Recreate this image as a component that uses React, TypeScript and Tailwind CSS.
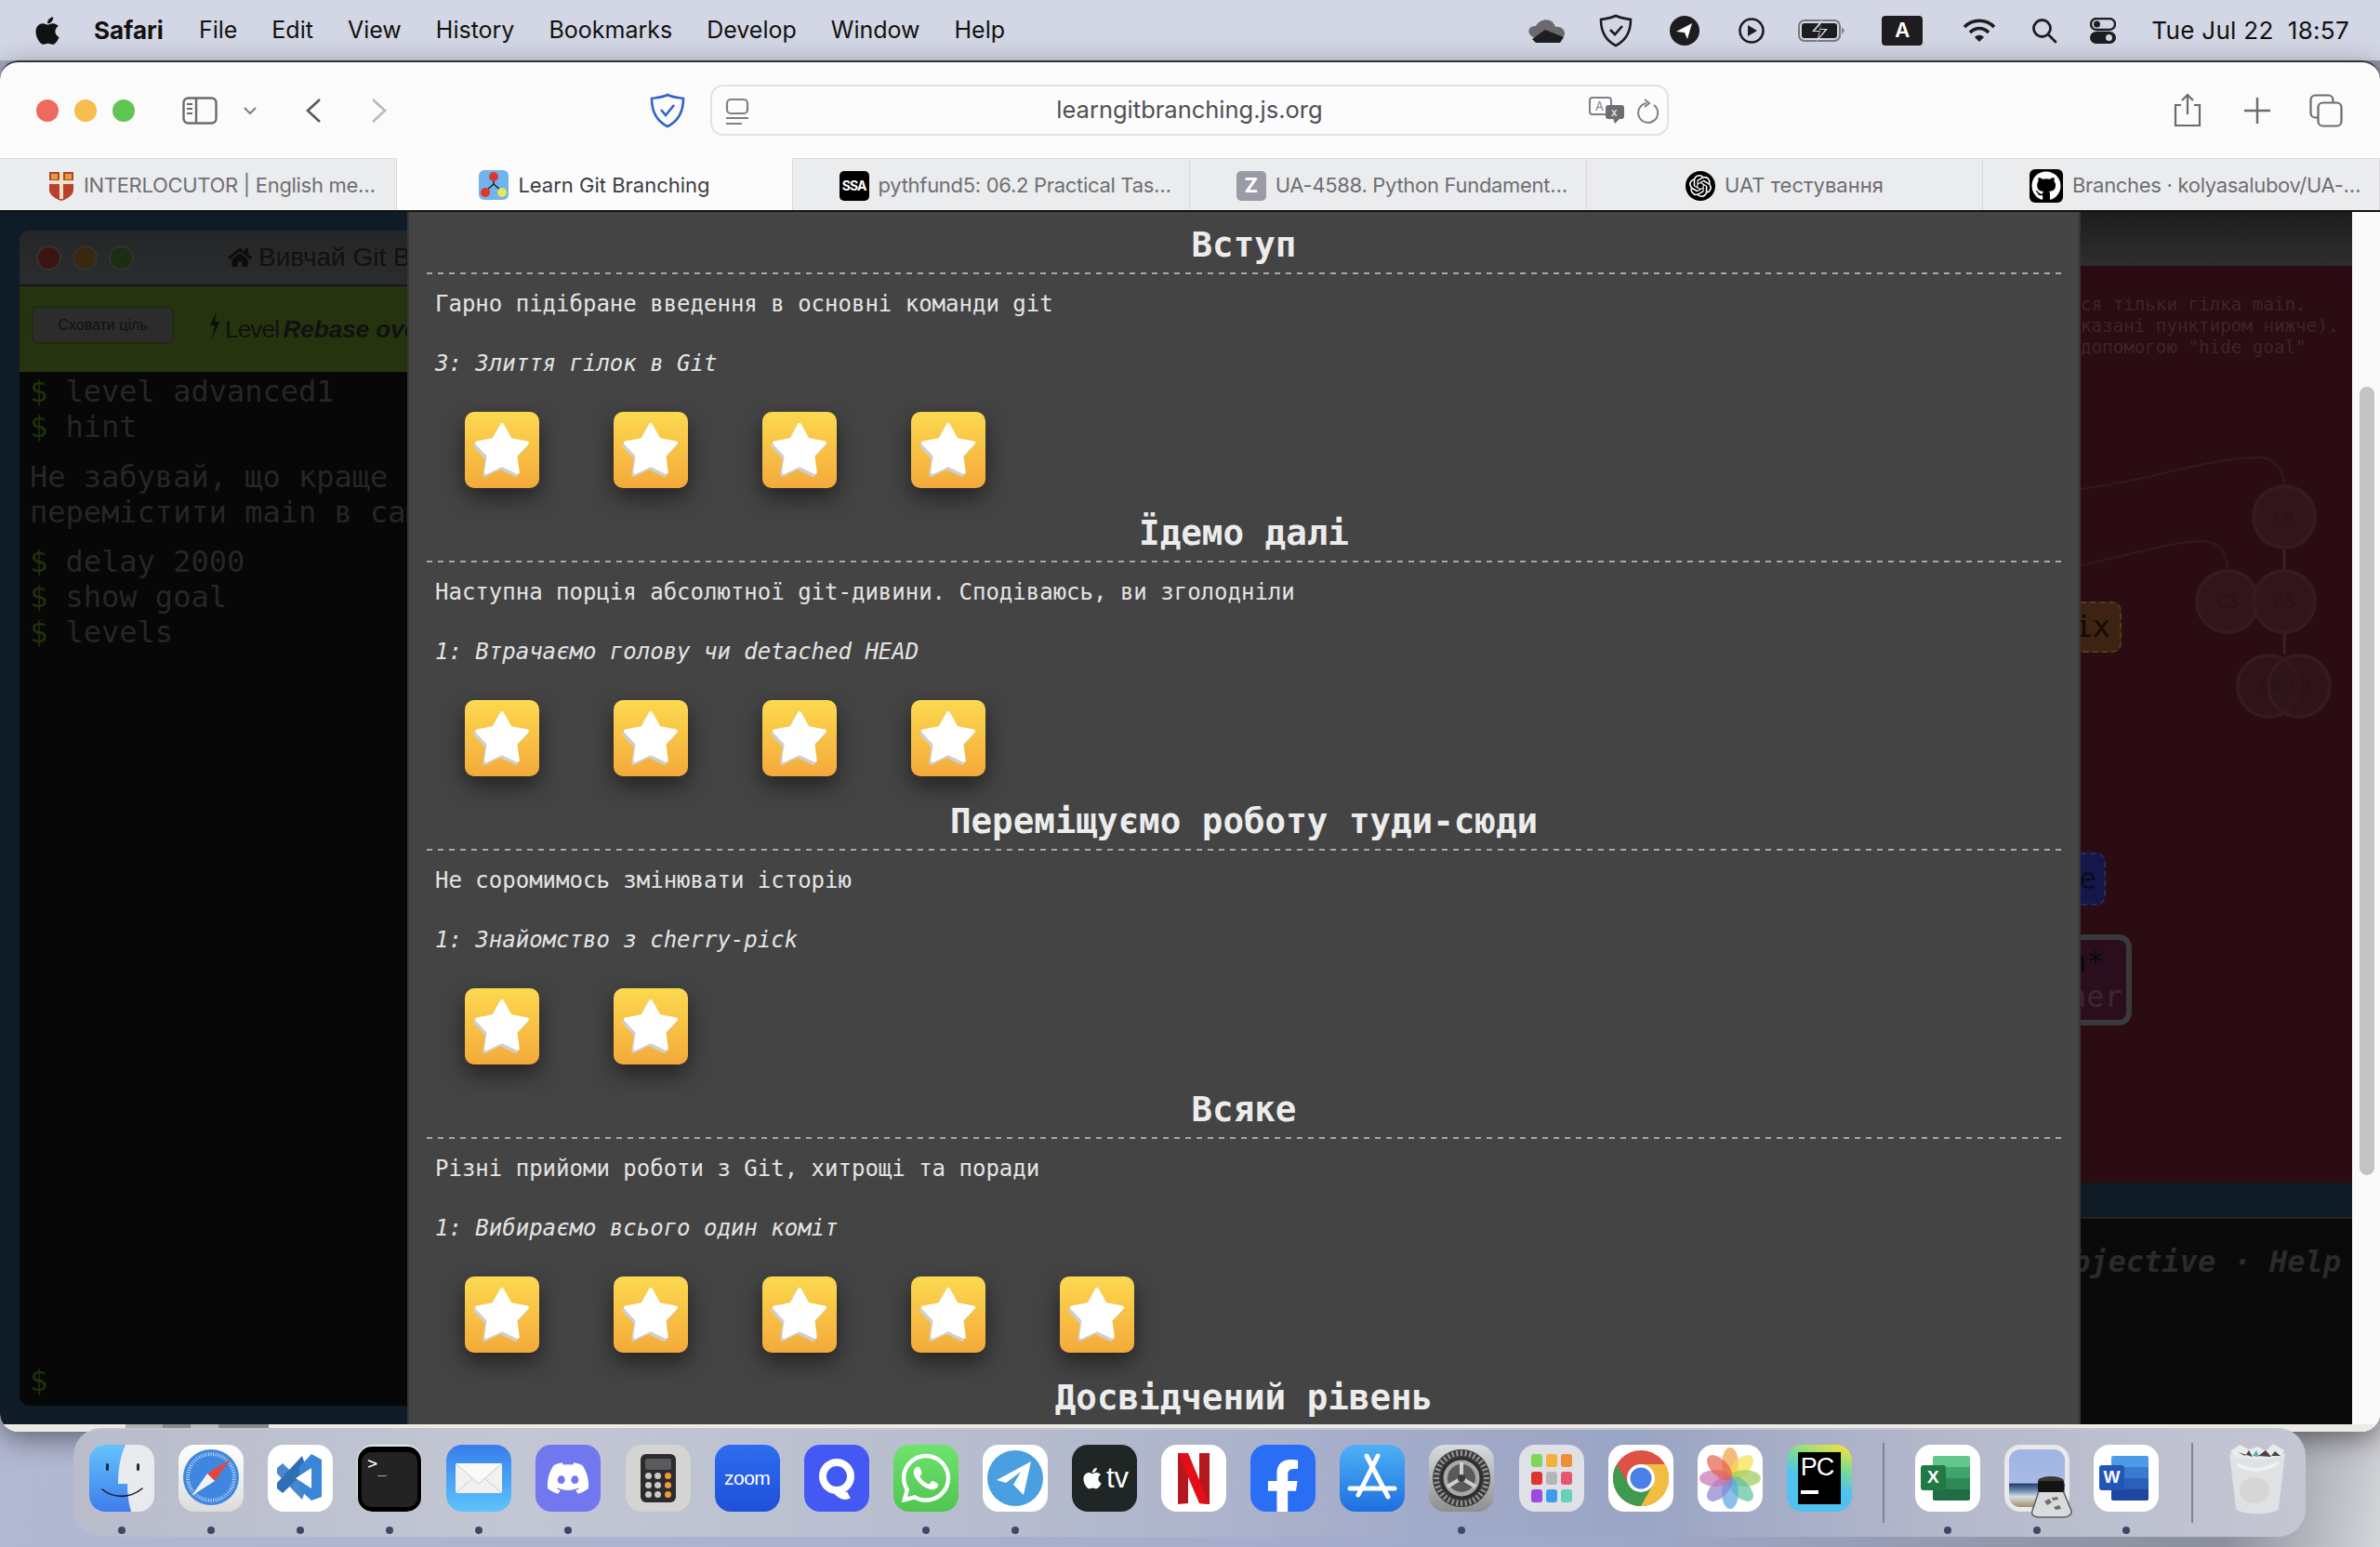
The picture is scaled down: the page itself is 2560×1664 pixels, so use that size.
import { FaApple, FaDiscord, FaFacebookF, FaGithub, FaHome, FaWhatsapp } from "react-icons/fa";
import { SiOpenai } from "react-icons/si";

const sections = [
  { title: "Вступ", text: "Гарно підібране введення в основні команди git", level: "3: Злиття гілок в Git", stars: 4 },
  { title: "Їдемо далі", text: "Наступна порція абсолютної git-дивини. Сподіваюсь, ви зголодніли", level: "1: Втрачаємо голову чи detached HEAD", stars: 4 },
  { title: "Переміщуємо роботу туди-сюди", text: "Не соромимось змінювати історію", level: "1: Знайомство з cherry-pick", stars: 2 },
  { title: "Всяке", text: "Різні прийоми роботи з Git, хитрощі та поради", level: "1: Вибираємо всього один коміт", stars: 5 },
  { title: "Досвідчений рівень", text: "", level: "", stars: 0 },
];

const menus = ["File", "Edit", "View", "History", "Bookmarks", "Develop", "Window", "Help"];

function StarTile() {
  return (
    <div className="w-[80px] h-[82px] rounded-[10px] bg-gradient-to-b from-[#fbd94f] to-[#f4a93a] shadow-[0_10px_24px_rgba(0,0,0,0.5)]">
      <svg width="80" height="82" viewBox="0 0 80 82">
        <g strokeLinejoin="round" strokeWidth="4">
          <polygon transform="translate(-2 3)" fill="#cfcfcf" stroke="#cfcfcf" points="40,14 48.8,30 67,33.4 54.3,46.8 56.8,65 40,57 23.2,65 25.7,46.8 13,33.4 31.2,30" />
          <polygon fill="#fff" stroke="#fff" points="40,14 48.8,30 67,33.4 54.3,46.8 56.8,65 40,57 23.2,65 25.7,46.8 13,33.4 31.2,30" />
        </g>
      </svg>
    </div>
  );
}

function Section({ s }: { s: (typeof sections)[number] }) {
  return (
    <div className="h-[310px] shrink-0">
      <div className="h-[60px] flex items-center justify-center text-[37.5px] font-bold text-[#ececec]">{s.title}</div>
      <div className="h-[2px] bg-[repeating-linear-gradient(90deg,#a8a8a8_0,#a8a8a8_6px,transparent_6px,transparent_12px)]" />
      <div className="ml-[9px] mt-[16px] h-[32px] leading-[32px]">{s.text}</div>
      <div className="ml-[9px] mt-[32px] h-[32px] leading-[32px] italic">{s.level}</div>
      <div className="ml-[41px] mt-[36px] flex gap-[80px]">
        {Array.from({ length: s.stars }).map((_, i) => (
          <StarTile key={i} />
        ))}
      </div>
    </div>
  );
}

function Tile({ children, className }: { children?: React.ReactNode; className: string }) {
  return <div className={"relative w-[70px] h-[72px] rounded-[17px] overflow-hidden flex items-center justify-center " + className}>{children}</div>;
}

function Finder() {
  return (
    <Tile className="bg-[#e8eaee]">
      <svg width="70" height="72" viewBox="0 0 70 72">
        <defs>
          <linearGradient id="fin" x1="0" y1="0" x2="0" y2="1">
            <stop offset="0" stopColor="#63c3fb" />
            <stop offset="1" stopColor="#3f7cec" />
          </linearGradient>
        </defs>
        <path d="M0 0H39C33 13 31 28 31 42H41C41 52 42 62 45 72H0Z" fill="url(#fin)" />
        <rect x="18" y="20" width="3" height="8" rx="1.5" fill="#1c2a3a" />
        <rect x="51" y="20" width="3" height="8" rx="1.5" fill="#1c2a3a" />
        <path d="M14 48C26 58 44 58 57 47" fill="none" stroke="#1c1c1c" strokeWidth="1.6" strokeLinecap="round" />
      </svg>
    </Tile>
  );
}

function Safari() {
  const ticks = Array.from({ length: 60 }).map((_, i) => i * 6);
  return (
    <Tile className="bg-gradient-to-b from-white to-[#dcdcdc]">
      <svg width="70" height="72" viewBox="0 0 70 72">
        <circle cx="35" cy="35" r="30" fill="#3f86e0" />
        {ticks.map((t) => (
          <line key={t} x1="35" y1="8" x2="35" y2="12" stroke="#cfe3fa" strokeWidth="0.9" transform={`rotate(${t} 35 35)`} />
        ))}
        <polygon points="56,15 39,39 31,31" fill="#e0483e" />
        <polygon points="14,55 31,31 39,39" fill="#f2f2f2" />
      </svg>
    </Tile>
  );
}

function VsCode() {
  return (
    <Tile className="bg-white">
      <svg width="70" height="72" viewBox="0 0 70 72">
        <path d="M10 25L16 20L42 45L37 59L10 31Z" fill="#3f7fc9" opacity="0.95" />
        <path d="M10 47L16 52L42 27L37 12L10 41Z" fill="#2f6db5" />
        <path d="M47 10L58 16V56L47 60L34 48V24Z" fill="#3a86d6" />
        <path d="M47 25V47L30 36Z" fill="#fff" />
      </svg>
    </Tile>
  );
}

function Terminal() {
  return (
    <Tile className="bg-[#dfe8ea]">
      <div className="absolute left-[1px] right-[1px] top-[2px] bottom-0 rounded-[15px] bg-black" />
      <div className="absolute left-[5px] right-[5px] top-[8px] bottom-[5px] rounded-[10px] bg-[#232323]" />
      <span className="absolute left-[11px] top-[9px] text-[18px] leading-[22px] text-white font-['DejaVu_Sans_Mono',monospace]">&gt;</span>
      <span className="absolute left-[22px] top-[14px] text-[16px] leading-[22px] text-white font-['DejaVu_Sans_Mono',monospace]">_</span>
    </Tile>
  );
}

function Mail() {
  return (
    <Tile className="bg-gradient-to-b from-[#3a7cec] to-[#5ec4fb]">
      <svg width="70" height="72" viewBox="0 0 70 72">
        <rect x="10" y="20" width="50" height="32" rx="2" fill="#f1f1f1" />
        <path d="M10 20L35 42L60 20" fill="#fafafa" stroke="#c9c9c9" strokeWidth="1" />
        <path d="M10 52L29 36M60 52L41 36" stroke="#cfcfcf" strokeWidth="1" />
      </svg>
    </Tile>
  );
}

function Calculator() {
  const colors = ["#c9c9c9", "#c9c9c9", "#f19a38"];
  return (
    <Tile className="bg-[#d4d4d2]">
      <div className="w-[38px] h-[52px] rounded-[6px] bg-[#2c2c2e] pt-[5px] px-[5px] flex flex-col gap-[3px]">
        <div className="h-[12px] rounded-[2px] bg-[#5b5b5d]" />
        {[0, 1, 2].map((r) => (
          <div key={r} className="flex justify-between">
            {colors.map((c, i) => (
              <span key={i} className="w-[7px] h-[7px] rounded-full" style={{ background: c }} />
            ))}
          </div>
        ))}
      </div>
    </Tile>
  );
}

function Telegram() {
  return (
    <Tile className="bg-white">
      <svg width="70" height="72" viewBox="0 0 70 72">
        <circle cx="35" cy="36" r="30" fill="#4a9fe0" />
        <path d="M15 38L52 18L44 54L33 43L41 29L25 41Z" fill="#fff" />
      </svg>
    </Tile>
  );
}

function AppStore() {
  return (
    <Tile className="bg-gradient-to-b from-[#4fb0f5] to-[#1e6fe0]">
      <svg width="70" height="72" viewBox="0 0 70 72" fill="none" stroke="#fff" strokeLinecap="round">
        <path d="M29 12L52 56" strokeWidth="5" />
        <path d="M41 12L20 54" strokeWidth="5" />
        <path d="M11 47H59" strokeWidth="5" />
      </svg>
    </Tile>
  );
}

function Settings() {
  const teeth = Array.from({ length: 36 }).map((_, i) => i * 10);
  return (
    <Tile className="bg-gradient-to-b from-[#d8dce0] to-[#8f8f8f]">
      <svg width="70" height="72" viewBox="0 0 70 72">
        <circle cx="35" cy="36" r="31" fill="#3c3c3c" />
        {teeth.map((t) => (
          <line key={t} x1="35" y1="6" x2="35" y2="12" stroke="#9a9a9a" strokeWidth="2" transform={`rotate(${t} 35 36)`} />
        ))}
        <circle cx="35" cy="36" r="21" fill="#a8a8a8" stroke="#2e2e2e" strokeWidth="3" />
        <circle cx="35" cy="36" r="15" fill="#5a5a5a" />
        <path d="M35 36V19M35 36L20 45M35 36L50 45" stroke="#cfcfcf" strokeWidth="4" />
        <circle cx="35" cy="36" r="4" fill="#3c3c3c" />
      </svg>
    </Tile>
  );
}

function Launchpad() {
  const cells = ["#7fd65a", "#f3b23e", "#ef8f35", "#e0342e", "#b5b5b5", "#e85670", "#9c4be0", "#3e9bf0", "#65d2b8"];
  return (
    <Tile className="bg-[#dfe1e6]">
      <div className="grid grid-cols-3 gap-x-[4px] gap-y-[5px]">
        {cells.map((c) => (
          <span key={c} className="w-[12px] h-[14px] rounded-[3px]" style={{ background: c }} />
        ))}
      </div>
    </Tile>
  );
}

function Chrome() {
  return (
    <Tile className="bg-white">
      <svg width="70" height="72" viewBox="0 0 70 72">
        <circle cx="35" cy="36" r="30" fill="#de5246" />
        <path d="M9 21A30 30 0 0 0 35 66L48 43L22 43Z" fill="#3f9a4e" />
        <path d="M35 66A30 30 0 0 0 61 21H35L48 43Z" fill="#f3bd3f" />
        <circle cx="35" cy="36" r="15" fill="#fff" />
        <circle cx="35" cy="36" r="11.5" fill="#4a80e8" />
      </svg>
    </Tile>
  );
}

function Photos() {
  const petals = [
    ["#f2a03c", 0],
    ["#f5e04a", 45],
    ["#9ccb5a", 90],
    ["#5cbf9c", 135],
    ["#5aa5e0", 180],
    ["#8a7fd0", 225],
    ["#c970b0", 270],
    ["#e75f4d", 315],
  ] as const;
  return (
    <Tile className="bg-white">
      <svg width="70" height="72" viewBox="0 0 70 72">
        {petals.map(([c, a]) => (
          <ellipse key={a} cx="35" cy="20" rx="9" ry="17" fill={c} opacity="0.7" transform={`rotate(${a} 35 36)`} />
        ))}
      </svg>
    </Tile>
  );
}

function PyCharm() {
  return (
    <Tile className="bg-[linear-gradient(20deg,#4fc2f0_45%,#7edc8e_70%,#f3e13e_95%)]">
      <div className="w-[46px] h-[56px] bg-black px-[3px] pt-[1px] font-['Liberation_Sans',sans-serif] text-white">
        <div className="text-[27px] leading-[30px] tracking-[-1px]">PC</div>
        <div className="mt-[10px] h-[4px] w-[19px] bg-white" />
      </div>
    </Tile>
  );
}

function Office({ letter, bg, bands }: { letter: string; bg: string; bands: string[] }) {
  return (
    <Tile className="bg-white">
      <div className="absolute left-[19px] top-[12px] w-[40px] h-[48px] rounded-[2px] overflow-hidden flex flex-col">
        {bands.map((b) => (
          <div key={b} className="flex-1" style={{ background: b }} />
        ))}
      </div>
      <div className="absolute left-[6px] top-[22px] w-[27px] h-[27px] rounded-[3px] text-white flex items-center justify-center text-[19px] font-bold font-['Liberation_Sans',sans-serif]" style={{ background: bg }}>
        {letter}
      </div>
    </Tile>
  );
}

function Ink() {
  return (
    <div className="relative w-[70px] h-[72px]">
      <div className="absolute inset-0 rounded-[17px] overflow-hidden border-[5px] border-[#e9e9eb] bg-[linear-gradient(180deg,#9fb4e4_0,#a9bbe6_58%,#27406f_60%,#5f7fa5_70%,#d6dfe5_82%,#a58b6a_100%)]" />
      <svg className="absolute left-[29px] top-[33px]" width="44" height="46" viewBox="0 0 44 46">
        <path d="M9 14H33L43 38C44 43 38 45 34 45H8C4 45 -1 43 1 38Z" fill="#d9dbdd" stroke="#5d5d5d" strokeWidth="1.5" />
        <ellipse cx="21" cy="6" rx="14" ry="5" fill="#3a3a3a" />
        <rect x="7" y="6" width="28" height="12" rx="2" fill="#141414" />
        <path d="M14 28l5-3 3 4-5 3zM24 34l6-2 2 4-6 1zM22 24l6-1 1 3-6 1z" fill="#6d6f72" />
      </svg>
    </div>
  );
}

function Trash() {
  return (
    <svg width="70" height="84" viewBox="0 0 70 84">
      <path d="M5 12C20 18 50 18 65 12L58 72C52 79 18 79 12 72Z" fill="#dfe1e3" />
      <path d="M6 10L16 3L26 8L36 5L44 10L52 2L64 9L60 16C44 20 26 20 10 16Z" fill="#e8eaec" />
      <path d="M14 11L22 15L26 9L30 16ZM36 15L44 9L50 16ZM54 10L60 15H50Z" fill="#4b4240" />
      <path d="M30 15L34 9L37 16Z" fill="#4fb0b8" />
      <path d="M14 24C30 34 44 30 58 22" stroke="#eff0f2" strokeWidth="4" fill="none" />
      <ellipse cx="32" cy="52" rx="16" ry="14" fill="#d8d6d5" />
    </svg>
  );
}

function Dock() {
  const dot = "mt-[16px] size-2 rounded-full bg-[#3c4868]";
  const items: { icon: React.ReactNode; running?: boolean }[] = [
    { icon: <Finder />, running: true },
    { icon: <Safari />, running: true },
    { icon: <VsCode />, running: true },
    { icon: <Terminal />, running: true },
    { icon: <Mail />, running: true },
    { icon: <Tile className="bg-[#7177ee]"><FaDiscord size={48} color="#fff" /></Tile>, running: true },
    { icon: <Calculator /> },
    { icon: <Tile className="bg-gradient-to-b from-[#2d6df0] to-[#1f4fd8] font-['Liberation_Sans',sans-serif] text-white text-[21px] tracking-[-0.5px]">zoom</Tile> },
    {
      icon: (
        <Tile className="bg-[#4458f4]">
          <svg width="70" height="72" viewBox="0 0 70 72" fill="none" stroke="#fff">
            <circle cx="35" cy="34" r="15" strokeWidth="8" />
            <path d="M33 47C38 55 44 56 48 54" strokeWidth="8" />
          </svg>
        </Tile>
      ),
    },
    { icon: <Tile className="bg-gradient-to-b from-[#6ee36e] to-[#4fc44f]"><FaWhatsapp size={60} color="#fff" /></Tile>, running: true },
    { icon: <Telegram />, running: true },
    {
      icon: (
        <Tile className="bg-[#1f2625] text-white gap-[2px]">
          <FaApple size={26} />
          <span className="text-[31px] leading-[34px] font-['Liberation_Sans',sans-serif]">tv</span>
        </Tile>
      ),
    },
    {
      icon: (
        <Tile className="bg-white">
          <svg width="36" height="56" viewBox="0 0 36 56">
            <path d="M1 1H12V55L1 56Z" fill="#b4171d" />
            <path d="M24 1H35V56L24 55Z" fill="#b4171d" />
            <path d="M1 1H12L35 56L24 55Z" fill="#e50e18" />
          </svg>
        </Tile>
      ),
    },
    { icon: <Tile className="bg-[#2b6ef6] items-end"><FaFacebookF size={60} color="#fff" className="translate-y-[4px]" /></Tile> },
    { icon: <AppStore /> },
    { icon: <Settings />, running: true },
    { icon: <Launchpad /> },
    { icon: <Chrome /> },
    { icon: <Photos /> },
    { icon: <PyCharm /> },
  ];
  const docs: { icon: React.ReactNode; running?: boolean }[] = [
    { icon: <Office letter="X" bg="#217a45" bands={["#62c58c", "#40a56c", "#2d8a57", "#1f6e44"]} />, running: true },
    { icon: <Ink />, running: true },
    { icon: <Office letter="W" bg="#2255b8" bands={["#4d9ae8", "#3a7bd0", "#2a5fbc", "#1f46a0"]} />, running: true },
  ];
  return (
    <div className="absolute left-[79px] top-[1536px] w-[2401px] h-[117px] rounded-[30px] border-t-2 border-[#c3c6d0] bg-[linear-gradient(90deg,#b8bccb_0,#c3c7d4_20%,#b4bacd_45%,#a2abc9_60%,#9aa4c4_70%,#b6bacb_85%,#c4c6d2_100%)] flex pl-[17px] pt-[16px]">
      <div className="flex gap-[26.1px]">
        {items.map((it, i) => (
          <div key={i} className="flex flex-col items-center w-[70px]">
            {it.icon}
            {it.running && <div className={dot} />}
          </div>
        ))}
      </div>
      <div className="mx-[33px] mt-[-2px] h-[86px] w-[2px] bg-[#7e8394]" />
      <div className="flex gap-[26.1px]">
        {docs.map((it, i) => (
          <div key={i} className="flex flex-col items-center w-[70px]">
            {it.icon}
            {it.running && <div className={dot} />}
          </div>
        ))}
      </div>
      <div className="mx-[35px] mt-[-2px] h-[86px] w-[2px] bg-[#7e8394]" />
      <div className="-ml-[1px] mt-[-3px]">
        <Trash />
      </div>
    </div>
  );
}

function StatusIcons() {
  return (
    <div className="flex items-center text-[#1d1d1f]">
      <svg width="42" height="26" viewBox="0 0 42 26">
        <path d="M13 21C4 21 1 15 3 11C5 8 8 8 10 8C13 2 20 0 25 2C28 3 30 6 31 9C36 8 41 11 41 16C41 20 38 21 36 21Z" fill="#6a6a6e" />
        <path d="M6 22L20 12L40 20L36 26H10Z" fill="#1d1d1f" />
      </svg>
      <svg className="ml-[36px]" width="36" height="36" viewBox="0 0 36 36" fill="none" stroke="#1d1d1f" strokeWidth="2.6">
        <path d="M18 2C24 5 29 5 34 6C34 20 28 29 18 34C8 29 2 20 2 6C7 5 12 5 18 2Z" />
        <path d="M12 17L17 22L25 13" />
      </svg>
      <svg className="ml-[40px]" width="32" height="32" viewBox="0 0 32 32">
        <circle cx="16" cy="16" r="16" fill="#1d1d1f" />
        <path d="M7 17L24 8L19 25L16 18Z" fill="#fff" />
      </svg>
      <svg className="ml-[42px]" width="28" height="28" viewBox="0 0 28 28">
        <circle cx="14" cy="14" r="12.5" fill="none" stroke="#1d1d1f" strokeWidth="2.6" />
        <path d="M10 8L20 14L10 20Z" fill="#1d1d1f" />
      </svg>
      <svg className="ml-[36px]" width="51" height="24" viewBox="0 0 51 24">
        <rect x="1" y="1" width="44" height="22" rx="6" fill="none" stroke="#777a82" strokeWidth="2" />
        <rect x="4" y="4" width="38" height="16" rx="3" fill="#1d1d1f" />
        <path d="M26 0L15 13H23L20 24L32 10H24Z" fill="#d3d6e4" />
        <path d="M26 3L18 12H24L22 20L29 11H23Z" fill="#1d1d1f" />
        <path d="M47 8L50 12L47 16Z" fill="#777a82" />
      </svg>
      <div className="ml-[39px] w-[44px] h-[32px] rounded-[4px] bg-[#1d1d1f] text-white flex items-center justify-center text-[22px] font-semibold">A</div>
      <svg className="ml-[43px]" width="36" height="28" viewBox="0 0 36 28" fill="none" stroke="#1d1d1f" strokeWidth="3.6">
        <path d="M2 10C11 1 25 1 34 10" />
        <path d="M8 16C14 10 22 10 28 16" />
        <path d="M18 26L13 21C16 18 20 18 23 21Z" fill="#1d1d1f" stroke="none" />
      </svg>
      <svg className="ml-[38px]" width="28" height="28" viewBox="0 0 28 28" fill="none" stroke="#1d1d1f" strokeWidth="2.8">
        <circle cx="11.5" cy="11.5" r="9" />
        <path d="M18 18L26 26" strokeLinecap="round" />
      </svg>
      <svg className="ml-[35px]" width="28" height="28" viewBox="0 0 28 28">
        <rect x="1" y="1" width="26" height="12" rx="6" fill="none" stroke="#1d1d1f" strokeWidth="2.4" />
        <circle cx="7.5" cy="7" r="3.5" fill="#1d1d1f" />
        <rect x="0" y="15" width="28" height="13" rx="6.5" fill="#1d1d1f" />
        <circle cx="20.5" cy="21.5" r="3.5" fill="#d3d6e4" />
      </svg>
    </div>
  );
}

function Toolbar() {
  return (
    <div className="h-[103px] flex items-center shrink-0 text-[#6b6b6e]">
      <div className="ml-[39px] flex gap-[17px]">
        <span className="size-[24px] rounded-full bg-[#ee6a5f]" />
        <span className="size-[24px] rounded-full bg-[#f6bd4f]" />
        <span className="size-[24px] rounded-full bg-[#61c554]" />
      </div>
      <svg className="ml-[51px]" width="38" height="30" viewBox="0 0 38 30" fill="none" stroke="#6b6b6e" strokeWidth="2.4">
        <rect x="1.5" y="1.5" width="35" height="27" rx="5" />
        <path d="M15 2V28" />
        <path d="M5 8H11M5 13H11M5 18H11" strokeWidth="1.8" />
      </svg>
      <svg className="ml-[27px]" width="16" height="10" viewBox="0 0 16 10" fill="none" stroke="#808084" strokeWidth="2.2">
        <path d="M2 2L8 8L14 2" />
      </svg>
      <svg className="ml-[51px]" width="18" height="28" viewBox="0 0 18 28" fill="none" stroke="#5a5a5c" strokeWidth="2.6">
        <path d="M16 2L3 14L16 26" />
      </svg>
      <svg className="ml-[53px]" width="18" height="28" viewBox="0 0 18 28" fill="none" stroke="#b9b9bc" strokeWidth="2.6">
        <path d="M2 2L15 14L2 26" />
      </svg>
      <svg className="ml-[281px]" width="40" height="38" viewBox="0 0 40 38" fill="none" stroke="#2f63c9" strokeWidth="2.6">
        <path d="M20 2C26 5 32 5 37 6C37 21 30 31 20 36C10 31 3 21 3 6C8 5 14 5 20 2Z" />
        <path d="M13 18L18 24L27 13" />
      </svg>
      <div className="relative ml-[26px] w-[1031px] h-[55px] rounded-[14px] border-2 border-[#e2e2e4] bg-[#fcfcfd] flex items-center justify-center text-[25.5px] text-[#505054]">
        learngitbranching.js.org
        <svg className="absolute left-[14px] top-[12px]" width="26" height="30" viewBox="0 0 26 30" fill="none" stroke="#808084" strokeWidth="2.2">
          <rect x="2" y="2" width="22" height="15" rx="4" />
          <path d="M1 22H25" />
          <path d="M1 28H18" />
        </svg>
        <svg className="absolute right-[44px] top-[11px]" width="40" height="30" viewBox="0 0 40 30">
          <rect x="1" y="1" width="23" height="18" rx="3" fill="none" stroke="#808084" strokeWidth="2" />
          <text x="7" y="15" fontSize="13" fill="#808084">A</text>
          <rect x="18" y="9" width="20" height="15" rx="3" fill="#6e6e72" />
          <text x="24" y="21" fontSize="12" fill="#fff">x</text>
          <path d="M28 29L34 23H26Z" fill="#6e6e72" />
        </svg>
        <svg className="absolute right-[8px] top-[13px]" width="26" height="28" viewBox="0 0 26 28" fill="none" stroke="#808084" strokeWidth="2">
          <path d="M20 7A10.5 10.5 0 1 1 12 5" />
          <path d="M10 1L15 5L10 9" />
        </svg>
      </div>
      <svg className="ml-[542px]" width="32" height="38" viewBox="0 0 32 38" fill="none" stroke="#6b6b6e" strokeWidth="2.2">
        <path d="M9 13H3V35H29V13H23" />
        <path d="M16 23V2M10 8L16 2L22 8" />
      </svg>
      <svg className="ml-[43px]" width="32" height="32" viewBox="0 0 32 32" fill="none" stroke="#6b6b6e" strokeWidth="2.4">
        <path d="M16 2V30M2 16H30" />
      </svg>
      <svg className="ml-[40px]" width="36" height="36" viewBox="0 0 36 36" fill="none" stroke="#6b6b6e" strokeWidth="2.2">
        <rect x="1.5" y="1.5" width="24" height="24" rx="5" />
        <rect x="9.5" y="9.5" width="25" height="25" rx="5" fill="#fcfcfd" />
      </svg>
    </div>
  );
}

function Tabs() {
  const tabs = [
    {
      label: "INTERLOCUTOR | English me…",
      long: true,
      icon: (
        <svg width="28" height="32" viewBox="0 0 28 32">
          <path d="M1 1H27V20C27 26 20 30 14 32C8 30 1 26 1 20Z" fill="#b8402c" />
          <path d="M14 1V30M1 12H27" stroke="#f0e3c8" strokeWidth="4" />
          <rect x="3" y="3" width="7" height="6" fill="#d8a23c" />
          <rect x="18" y="3" width="7" height="6" fill="#d8a23c" />
        </svg>
      ),
    },
    {
      label: "Learn Git Branching",
      active: true,
      icon: (
        <svg width="32" height="32" viewBox="0 0 32 32">
          <rect width="32" height="32" rx="6" fill="#6fb4ee" />
          <path d="M16 9V15M16 15L8 22M16 15L24 22" stroke="#222" strokeWidth="1.5" />
          <circle cx="16" cy="7" r="5" fill="#e0342e" />
          <circle cx="7" cy="24" r="5" fill="#e0342e" />
          <circle cx="25" cy="24" r="5" fill="#e6e85a" />
        </svg>
      ),
    },
    {
      label: "pythfund5: 06.2 Practical Tas…",
      long: true,
      icon: <div className="w-[32px] h-[32px] rounded-[5px] bg-black text-white text-[14px] font-bold flex items-center justify-center tracking-[-1px]">SSA</div>,
    },
    {
      label: "UA-4588. Python Fundament…",
      long: true,
      icon: <div className="w-[32px] h-[32px] rounded-[5px] bg-[#9b9ba6] text-white text-[22px] font-bold flex items-center justify-center">Z</div>,
    },
    {
      label: "UAT тестування",
      icon: (
        <div className="w-[32px] h-[32px] rounded-full bg-black flex items-center justify-center">
          <SiOpenai size={24} color="#fff" />
        </div>
      ),
    },
    {
      label: "Branches · kolyasalubov/UA-…",
      long: true,
      icon: (
        <div className="w-[36px] h-[36px] rounded-[6px] bg-black flex items-center justify-center">
          <FaGithub size={32} color="#fff" />
        </div>
      ),
    },
  ];
  return (
    <div className="h-[56px] grid grid-cols-6 shrink-0 border-t border-[#dcdcde]">
      {tabs.map((t) => (
        <div
          key={t.label}
          className={
            t.active
              ? "flex items-center justify-center gap-[10px] bg-[#fcfcfd] pt-[2px] text-[22px] text-[#3c3c3e] whitespace-nowrap overflow-hidden border-r border-[#d8d8da] -mt-px"
              : t.long
                ? "flex items-center justify-center gap-[10px] bg-[#ebecee] pl-[30px] pt-[2px] text-[22px] tracking-[-0.3px] text-[#6e6f73] whitespace-nowrap overflow-hidden border-r border-[#d8d8da]"
                : "flex items-center justify-center gap-[10px] bg-[#ebecee] pt-[2px] text-[22px] text-[#6e6f73] whitespace-nowrap overflow-hidden border-r border-[#d8d8da]"
          }
        >
          {t.icon}
          <span>{t.label}</span>
        </div>
      ))}
    </div>
  );
}

function LeftPane() {
  const dollar = "text-[#1e3208]";
  return (
    <div className="w-[438px] shrink-0 bg-[#0f1c27] pl-[21px] pt-[20px] pb-[20px] flex flex-col overflow-hidden">
      <div className="w-[900px] h-[60px] shrink-0 rounded-tl-[10px] bg-[linear-gradient(180deg,#252627,#2b2c2d)] flex items-center relative text-[#0d0d0d] border-b-2 border-[#12181d]">
        <div className="ml-[20px] flex gap-[16px]">
          <span className="size-[23px] rounded-full bg-[#3a1512] shadow-[0_0_0_2px_#333]" />
          <span className="size-[23px] rounded-full bg-[#38290e] shadow-[0_0_0_2px_#333]" />
          <span className="size-[23px] rounded-full bg-[#1a2e12] shadow-[0_0_0_2px_#333]" />
        </div>
        <FaHome size={26} className="ml-[103px]" />
        <span className="ml-[7px] text-[28px] font-['Liberation_Sans',sans-serif] text-[#111]">Вивчай Git Branching</span>
      </div>
      <div className="w-[900px] h-[92px] shrink-0 bg-[#25340e] flex items-start pl-[13px] pt-[21px] font-['Liberation_Sans',sans-serif] text-[#111]">
        <div className="w-[153px] h-[41px] rounded-[6px] bg-[#2c2c2c] border-2 border-[#1f2b12] text-[16px] flex items-center justify-center">Сховати ціль</div>
        <svg className="ml-[38px] mt-[6px]" width="12" height="30" viewBox="0 0 12 30">
          <path d="M8 0L1 15H6L3 30L11 11H6Z" fill="#0e0e0e" />
        </svg>
        <span className="ml-[5px] mt-[6px] text-[26px] whitespace-nowrap">
          <span className="tracking-[-0.8px]">Level </span>
          <b className="-ml-[2px] italic">Rebase over 9000 разів</b>
        </span>
      </div>
      <div className="w-[900px] flex-1 rounded-bl-[10px] bg-[#070707] pt-[2px] pl-[11px] text-[32px] leading-[38px] text-[#262626] font-['DejaVu_Sans_Mono',monospace] whitespace-pre flex flex-col">
        <div><span className={dollar}>$</span> level advanced1</div>
        <div><span className={dollar}>$</span> hint</div>
        <div className="mt-[16px]">Не забувай, що краще</div>
        <div>перемістити main в самому кінці!</div>
        <div className="mt-[15px]"><span className={dollar}>$</span> delay 2000</div>
        <div><span className={dollar}>$</span> show goal</div>
        <div><span className={dollar}>$</span> levels</div>
        <div className="mt-auto mb-[8px]"><span className={dollar}>$</span></div>
      </div>
    </div>
  );
}

function RightPane() {
  return (
    <div className="w-[292px] shrink-0 flex flex-col overflow-hidden font-['DejaVu_Sans_Mono',monospace]">
      <div className="h-[58px] shrink-0 bg-[linear-gradient(180deg,#1d1d1d,#2e2e2e)]" />
      <div className="relative flex-1 bg-[#2a0c12] overflow-hidden">
        <div className="pt-[30px] text-[19.2px] leading-[23px] text-[#3f2427] whitespace-pre">
          <div>ся тільки гілка main.</div>
          <div>казані пунктиром нижче).</div>
          <div>допомогою "hide goal"</div>
        </div>
        <svg className="absolute left-0 top-0" width="292" height="986" viewBox="0 0 292 986" fill="none">
          <path d="M0 240C70 232 130 208 190 206C210 206 219 220 219 238" stroke="#351720" strokeWidth="2" />
          <path d="M0 322C50 312 90 298 130 296C150 296 158 310 158 328" stroke="#351720" strokeWidth="2" />
          <path d="M219 304V327M219 395V418" stroke="#3c1e25" strokeWidth="3" />
          <g fill="#31151b" stroke="#361a20" strokeWidth="4">
            <circle cx="219" cy="270" r="33" />
            <circle cx="158" cy="361" r="33" />
            <circle cx="219" cy="361" r="33" />
            <circle cx="202" cy="452" r="33" fillOpacity="0.8" />
            <circle cx="235" cy="452" r="33" fillOpacity="0.8" />
          </g>
          <g fill="#291216" fontSize="19" textAnchor="middle">
            <text x="219" y="277">C4</text>
            <text x="158" y="368">C3</text>
            <text x="219" y="368">C5</text>
            <text x="204" y="459">C6</text>
            <text x="237" y="459">C7</text>
          </g>
        </svg>
        <div className="absolute left-[-20px] top-[361px] w-[64px] h-[55px] rounded-[10px] border-2 border-dashed border-[#5a3a1e] bg-[#3c2312] text-[#120a04] text-[32px] leading-[50px] flex justify-end pr-[10px] whitespace-pre">fix</div>
        <div className="absolute left-[-20px] top-[631px] w-[47px] h-[57px] rounded-[10px] border-2 border-dashed border-[#2a2c5c] bg-[#15174a] text-[#0c0c20] text-[32px] leading-[52px] pl-[16px]">e</div>
        <div className="absolute left-[-20px] top-[719px] w-[75px] h-[98px] rounded-[14px] border-[6px] border-[#3a3a3a] bg-[#2b0e1e] text-[32px] leading-[38px] pt-[4px] pl-[1px]">
          <div className="text-[#0a0a0a]">n*</div>
          <div className="text-[#3d2830]">ner</div>
        </div>
      </div>
      <div className="h-[39px] shrink-0 bg-[#101c25] border-b-2 border-[#222]" />
      <div className="h-[221px] shrink-0 bg-[#0a0a0a] flex justify-end pr-[12px] pt-[27px] text-[32px] leading-[38px] italic font-bold text-[#2b2b2b] whitespace-pre">
        Objective · Help
      </div>
    </div>
  );
}

export default function App() {
  return (
    <div className="relative w-[2560px] h-[1664px] overflow-hidden bg-[linear-gradient(100deg,#a0a7bd_0,#b4bad4_3%,#aab2cf_40%,#a0a9cb_70%,#8c8f9c_94%,#d5d6da_100%)] font-['Inter',sans-serif]">
      <div className="h-[65px] bg-[#d3d6e4] flex items-center text-[25px] text-[#111]">
        <FaApple size={34} className="ml-[34px]" />
        <b className="ml-[33px] font-bold text-[26px]">Safari</b>
        <div className="ml-[38px] flex gap-[37px]">
          {menus.map((m) => (
            <span key={m}>{m}</span>
          ))}
        </div>
        <div className="ml-auto flex items-center">
          <StatusIcons />
          <span className="ml-[38px] mr-[33px] text-[26px] tracking-[0.3px]">Tue Jul 22&nbsp;&nbsp;18:57</span>
        </div>
      </div>
      <div className="h-[1475px] rounded-[20px] overflow-hidden border-t-2 border-[#2e3036] bg-[#fbfbfc] flex flex-col shadow-[0_8px_30px_rgba(0,0,0,0.45)]">
        <Toolbar />
        <Tabs />
        <div className="flex h-[1306px] shrink-0 border-t-2 border-[#111]">
          <LeftPane />
          <div className="w-[1800px] shrink-0 bg-[#444444] border-x-2 border-[#353535] px-[19px] pt-[5px] overflow-hidden flex flex-col text-[24px] text-[#e4e4e4] font-['DejaVu_Sans_Mono',monospace]">
            {sections.map((s) => (
              <Section key={s.title} s={s} />
            ))}
          </div>
          <RightPane />
          <div className="w-[30px] shrink-0 bg-[#fafafb] pl-[8px] pt-[188px]">
            <div className="w-[16px] h-[848px] rounded-full bg-[#c4c3c4]" />
          </div>
        </div>
        <div className="flex-1 bg-[#eceae4] flex overflow-hidden text-[26px] leading-[30px] text-black">
          <div className="w-[135px] shrink-0" />
          <div className="w-[40px] shrink-0 bg-[#b0b0b0]" />
          <div className="w-[30px] shrink-0 bg-[#8a8a90]" />
          <div className="w-[30px] shrink-0 bg-[#bbbbbb]" />
          <div className="w-[54px] shrink-0 bg-[#888890]" />
          <span>Стас Павршов</span>
        </div>
      </div>
      <Dock />
    </div>
  );
}
